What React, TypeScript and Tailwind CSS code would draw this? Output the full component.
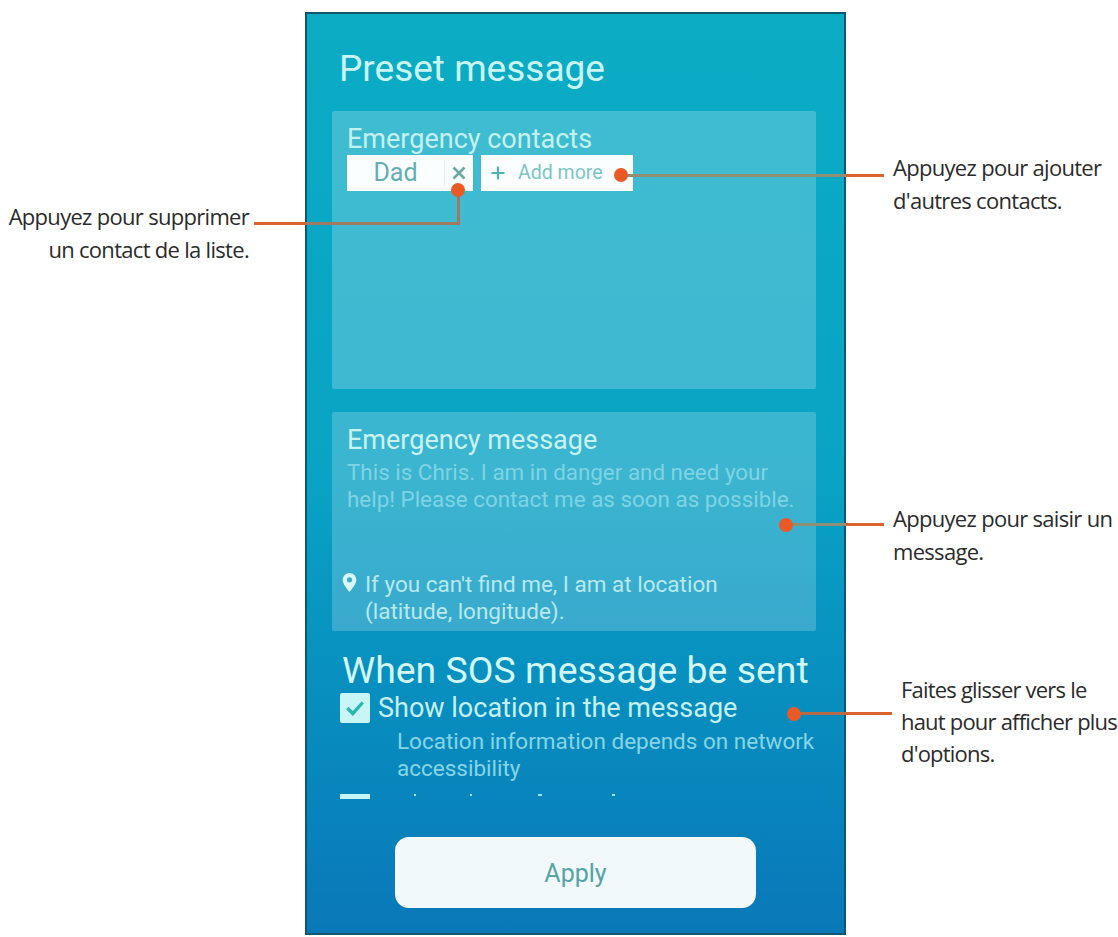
const roboto = "font-['Roboto',sans-serif]";
const note = "font-['Open_Sans',sans-serif] text-[22px] leading-[33px] tracking-[-0.7px] text-[#2b2b2b]";

function Dot({ className }: { className: string }) {
  return <div className={`absolute h-[14px] w-[14px] rounded-full bg-[#ea5a26] ${className}`} />;
}

// leader line: orange on the white page, greyer where it crosses the phone
function Line({ className }: { className: string }) {
  return <div className={`absolute ${className}`} />;
}

export default function App() {
  return (
    <div className={`relative flex h-[937px] w-[1118px] overflow-hidden bg-white ${roboto}`}>
      <div className="flex w-[305px] shrink-0 flex-col items-end pr-[56px] pt-[200px]">
        <div className={`${note} whitespace-nowrap text-right`}>
          Appuyez pour supprimer
          <br />
          un contact de la liste.
        </div>
      </div>

      <div className="mt-[12px] flex h-[923px] w-[541px] shrink-0 flex-col border-2 border-[#12566a] bg-gradient-to-b from-[#0bacc4] via-[#0aa3c5] to-[#0a78b8] pl-[25px] pr-[28px]">
        <h1 className="ml-[7px] mt-[32px] text-[37px] font-normal leading-[46px] text-[#c9f6f4]">Preset message</h1>

        <section className="mt-[19px] h-[278px] rounded-[2px] bg-white/22 px-[15px] pt-[13px]">
          <div className="text-[27px] leading-[31px] text-[#c3f1ef]">Emergency contacts</div>
          <div className="flex gap-[8px]">
            <div className="flex h-[36px] w-[126px] items-center bg-[#fbfefe]">
              <span className="w-[97px] text-center text-[25px] text-[#62aeb0]">Dad</span>
              <span className="flex h-[26px] flex-1 items-center justify-center border-l border-[#dff0f0]">
                <svg viewBox="0 0 14 14" className="h-[14px] w-[14px] stroke-[#6aa9a8]" strokeWidth="2.6" fill="none">
                  <path d="M1.5 1.5l11 11M12.5 1.5l-11 11" />
                </svg>
              </span>
            </div>
            <div className="flex h-[36px] w-[152px] items-center bg-[#fbfefe] pl-[10px] text-[19.5px] text-[#7cc4c6]">
              <svg viewBox="0 0 14 14" className="mr-[13px] h-[14px] w-[14px] stroke-[#4fb3b5]" strokeWidth="2.2" fill="none">
                <path d="M7 0.5v13M0.5 7h13" />
              </svg>
              Add more
            </div>
          </div>
        </section>

        <section className="mt-[23px] flex h-[219px] flex-col rounded-[2px] bg-white/20 px-[15px] pt-[13px]">
          <div className="text-[27px] leading-[30px] text-[#c9f3f2]">Emergency message</div>
          <p className="mt-[4px] whitespace-nowrap text-[22.4px] leading-[27px] text-[#7fd3e3]">
            This is Chris. I am in danger and need your
            <br />
            help! Please contact me as soon as possible.
          </p>
          <div className="mt-auto mb-[6px] flex text-[22.5px] leading-[27px] text-[#b7e9ee]">
            <svg viewBox="0 0 14 18" className="ml-[-5px] mr-[8px] mt-[2px] h-[19px] w-[15px] shrink-0 fill-[#d8f6f6]">
              <path fillRule="evenodd" d="M7 0a6.500 6.500 0 0 0-6.500 6.500C.5 11 7 18 7 18s6.500-7 6.500-11.500A6.500 6.500 0 0 0 7 0zm0 9a2.500 2.500 0 1 1 0-5 2.500 2.500 0 0 1 0 5z" />
            </svg>
            <span>
              If you can't find me, I am at location
              <br />
              (latitude, longitude).
            </span>
          </div>
        </section>

        <h2 className="ml-[10px] mt-[17px] whitespace-nowrap text-[37.4px] font-normal leading-[44px] text-[#d3f7f5]">When SOS message be sent</h2>
        <div className="ml-[8px] mt-[1px] flex items-center">
          <div className="flex h-[30px] w-[30px] items-center justify-center rounded-[2px] bg-[#c8f6f6]">
            <svg viewBox="0 0 20 20" className="h-[22px] w-[22px] stroke-[#28b6ae]" strokeWidth="3" fill="none">
              <path d="M3 10l5 5 9-10" />
            </svg>
          </div>
          <span className="ml-[8px] whitespace-nowrap text-[27px] leading-[30px] text-[#c5f0f2]">Show location in the message</span>
        </div>
        <p className="ml-[65px] mt-[5px] whitespace-nowrap text-[22.5px] leading-[27px] text-[#86d5e6]">
          Location information depends on network
          <br />
          accessibility
        </p>
        <div className="ml-[8px] mt-[12px] flex h-[5px] items-start">
          <div className="h-[5px] w-[30px] bg-[#c8f6f6]" />
          <div className="ml-[44px] h-[2px] w-[2px] bg-[#9fe0ea]" />
          <div className="ml-[54px] h-[2px] w-[2px] bg-[#9fe0ea]" />
          <div className="ml-[66px] h-[2px] w-[4px] bg-[#9fe0ea]" />
          <div className="ml-[70px] h-[2px] w-[3px] bg-[#9fe0ea]" />
        </div>

        <button className="ml-[63px] mt-[38px] flex h-[71px] w-[361px] items-center justify-center rounded-[14px] bg-[#f1f9fb] pt-[3px] text-[25px] text-[#57a3a8]">
          Apply
        </button>
      </div>

      <div className={`flex flex-1 flex-col pl-[47px] ${note}`}>
        <div className="mt-[151px] whitespace-nowrap">
          Appuyez pour ajouter
          <br />
          d'autres contacts.
        </div>
        <div className="mt-[285px] whitespace-nowrap">
          Appuyez pour saisir un
          <br />
          message.
        </div>
        <div className="ml-[8px] mt-[105px] whitespace-nowrap leading-[32px] tracking-[-0.8px]">
          Faites glisser vers le
          <br />
          haut pour afficher plus
          <br />
          d'options.
        </div>
      </div>

      <Line className="left-[254px] top-[222px] h-[3px] w-[51px] bg-[#d9622f]" />
      <Line className="left-[305px] top-[222px] h-[3px] w-[155px] bg-[#a07a60]" />
      <Line className="left-[457px] top-[192px] h-[33px] w-[3px] bg-[#a07a60]" />
      <Dot className="left-[451px] top-[183px]" />

      <Line className="left-[625px] top-[174px] h-[3px] w-[221px] bg-[#8f8f74]" />
      <Line className="left-[846px] top-[174px] h-[3px] w-[38px] bg-[#d9622f]" />
      <Dot className="left-[614px] top-[168px]" />

      <Line className="left-[790px] top-[523px] h-[3px] w-[56px] bg-[#8f8f74]" />
      <Line className="left-[846px] top-[523px] h-[3px] w-[38px] bg-[#d9622f]" />
      <Dot className="left-[779px] top-[518px]" />

      <Line className="left-[795px] top-[712px] h-[3px] w-[51px] bg-[#b56a45]" />
      <Line className="left-[846px] top-[712px] h-[3px] w-[46px] bg-[#d9622f]" />
      <Dot className="left-[787px] top-[707px]" />
    </div>
  );
}
